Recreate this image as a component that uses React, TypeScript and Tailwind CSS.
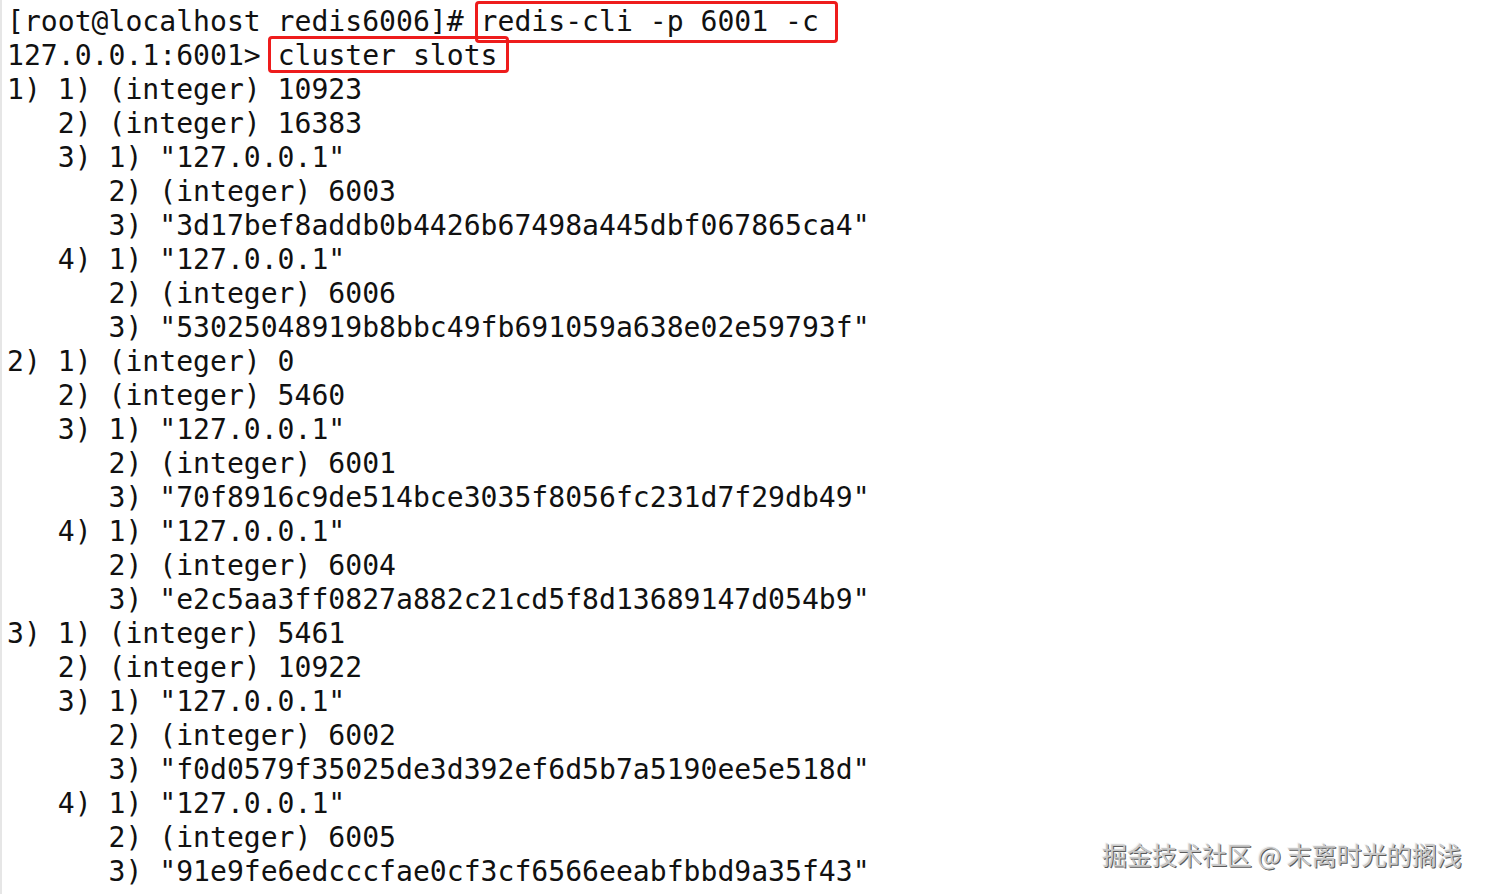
const lines: string[] = [
  '1) 1) (integer) 10923',
  '   2) (integer) 16383',
  '   3) 1) "127.0.0.1"',
  '      2) (integer) 6003',
  '      3) "3d17bef8addb0b4426b67498a445dbf067865ca4"',
  '   4) 1) "127.0.0.1"',
  '      2) (integer) 6006',
  '      3) "53025048919b8bbc49fb691059a638e02e59793f"',
  '2) 1) (integer) 0',
  '   2) (integer) 5460',
  '   3) 1) "127.0.0.1"',
  '      2) (integer) 6001',
  '      3) "70f8916c9de514bce3035f8056fc231d7f29db49"',
  '   4) 1) "127.0.0.1"',
  '      2) (integer) 6004',
  '      3) "e2c5aa3ff0827a882c21cd5f8d13689147d054b9"',
  '3) 1) (integer) 5461',
  '   2) (integer) 10922',
  '   3) 1) "127.0.0.1"',
  '      2) (integer) 6002',
  '      3) "f0d0579f35025de3d392ef6d5b7a5190ee5e518d"',
  '   4) 1) "127.0.0.1"',
  '      2) (integer) 6005',
  '      3) "91e9fe6edcccfae0cf3cf6566eeabfbbd9a35f43"',
]

export default function App() {
  return (
    <div className="relative h-[894px] w-[1487px] overflow-hidden bg-white">
      <div className="flex h-full">
        {/* left edge of the terminal window */}
        <div className="w-[2px] shrink-0 bg-[#e6e6e6]" />
        <pre
          className="m-0 pl-[5px] pt-[5px] text-[28.1px] leading-[34px] text-[#111]"
          style={{ fontFamily: '"DejaVu Sans Mono", monospace' }}
        >
          <div>
            [root@localhost redis6006]#{' '}
            <span className="relative inline-block">
              redis-cli -p 6001 -c
              <span className="absolute -left-[6px] -right-[19px] -top-[4px] -bottom-[4px] rounded-[4px] border-[3px] border-[#ee1c1c]" />
            </span>
          </div>
          <div>
            127.0.0.1:6001&gt;{' '}
            <span className="relative inline-block">
              cluster slots
              <span className="absolute -left-[10px] -right-[11px] -top-[3px] bottom-0 rounded-[4px] border-[3px] border-[#ee1c1c]" />
            </span>
          </div>
          {lines.map((l, i) => (
            <div key={i}>{l}</div>
          ))}
        </pre>
      </div>

      {/* watermark */}
      <div
        className="absolute left-[1102px] top-[837px] whitespace-nowrap text-[25px] leading-[34px] text-[#c8c8c8]"
        style={{
          fontFamily: '"Noto Sans CJK SC", "Noto Sans", sans-serif',
          textShadow: '1px 1px 0 #5a5a5a, -1px -1px 0 #f4f4f4',
        }}
      >
        掘金技术社区 @ 末离时光的搁浅
      </div>
    </div>
  )
}
